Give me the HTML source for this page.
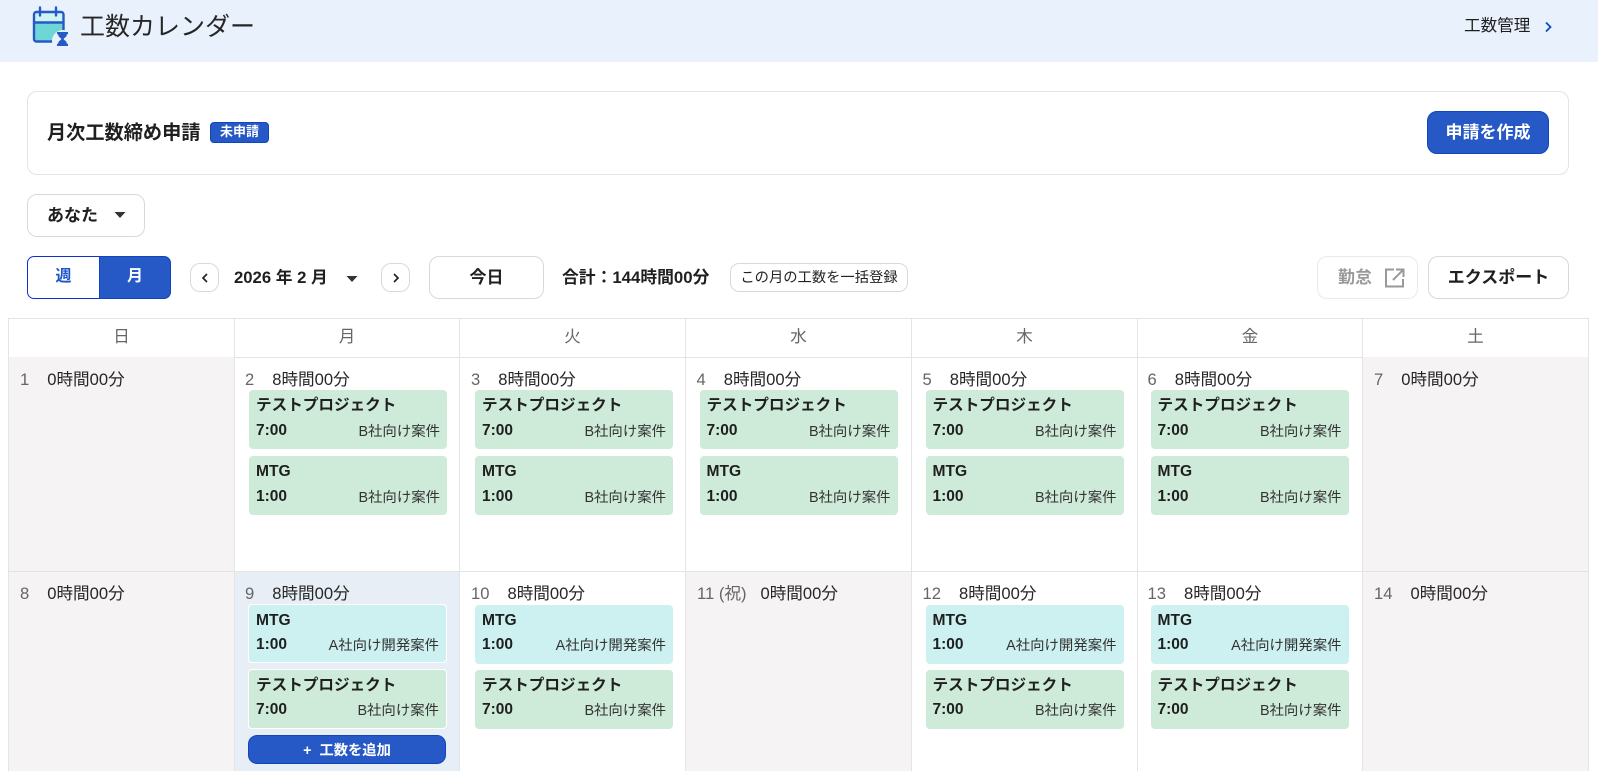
<!DOCTYPE html>
<html lang="ja"><head><meta charset="utf-8"><title>工数カレンダー</title>
<style>
*{box-sizing:border-box}
html,body{margin:0;padding:0;width:1600px;height:771px;overflow:hidden;background:#fff}
#w{position:relative;width:1600px;height:771px;overflow:hidden;background:#fff;color:#1f1f1f;font-family:"Liberation Sans","Noto Sans CJK JP",sans-serif}
.a{position:absolute}
.btn{position:absolute;background:#fff;border:1px solid #d9d9d9;border-radius:10px;display:flex;align-items:center;justify-content:center;font-weight:700;font-size:17px;padding-bottom:5px}
.p{background:#2659c6;border:1px solid #0f46bd;color:#fff}
.th{position:absolute;top:318px;height:40px;border:1px solid #e4e4e4;border-left:0;text-align:center;font-size:16.500px;line-height:37px;color:#666}
.c{position:absolute;border-right:1px solid #e4e4e4;font-size:16.600px}
.g{background:#f5f3f4}
.d{position:absolute;left:11px;top:8px;color:#666;white-space:nowrap}
.d b{font-weight:400;color:#262626;margin-left:18px}
.k{position:absolute;left:14px;width:198px;height:59px;border-radius:4px;background:#ceebd9}
.k.t{background:#ccf1f0}
.k.w{border:1px solid #fff;left:13px;width:199px}
.sh .k{left:13.500px}
.sh .d{left:10.500px}
.s3 .k{left:15px}
.s2 .d{left:10px}
.s6 .k{left:12.500px}
.s6 .d{left:9.500px}
.k i{position:absolute;left:7px;top:5px;font-style:normal;font-weight:700;font-size:15.600px;line-height:22px;white-space:nowrap}
.k u{position:absolute;left:7px;top:29px;text-decoration:none;font-weight:700;font-size:15.500px;line-height:22px}
.k s{position:absolute;right:7px;top:30px;text-decoration:none;font-size:14.400px;line-height:22px;color:#333;white-space:nowrap}
.r1{top:357px;height:215px;border-bottom:1px solid #e4e4e4}.r2{top:572px;height:199px}
.r1 .d{top:9px}
.r1 .k u{top:30px}
.r1 .k s{top:31px}
</style></head><body><div id="w">
<div class="a" style="left:0;top:0;width:1598px;height:62px;background:#e9f1fd"></div>
<svg class="a" style="left:30px;top:5px" width="42" height="42" viewBox="0 0 42 42">
<path d="M4 7h29v11H4z" fill="#cdf3f2"/><path d="M4 18h29v18H4z" fill="#6fd6d6"/>
<rect x="4" y="7" width="29.500" height="29.500" rx="2.500" fill="none" stroke="#2659c6" stroke-width="2.400"/>
<path d="M4 17.500h29" stroke="#2659c6" stroke-width="2.400"/>
<path d="M10 2.500v8M26 2.500v8" stroke="#2659c6" stroke-width="2.400" stroke-linecap="round"/>
<circle cx="33" cy="36" r="11" fill="#e9f1fd"/>
<path d="M27 27h11v2.200h-1.200c0 3.200-2.300 3-3.200 4.800.9 1.800 3.200 1.600 3.200 4.800H38V41H27v-2.200h1.200c0-3.200 2.300-3 3.200-4.800-.9-1.800-3.200-1.600-3.200-4.800H27z" fill="#2659c6"/>
</svg>
<div class="a" style="left:80px;top:9px;font-size:25px;line-height:36px;color:#262626;white-space:nowrap">工数カレンダー</div>
<div class="a" style="left:1464px;top:15px;font-size:16.600px;line-height:22px;white-space:nowrap">工数管理</div>
<svg class="a" style="left:1543px;top:20px" width="12" height="14" viewBox="0 0 12 14"><path d="M3 2.500l4.500 4.500-4.500 4.500" fill="none" stroke="#1248c0" stroke-width="1.800"/></svg>

<div class="a" style="left:27px;top:91px;width:1542px;height:84px;border:1px solid #e4e4e4;border-radius:10px"></div>
<div class="a" style="left:47px;top:121px;font-size:19.200px;line-height:26px;font-weight:700;white-space:nowrap">月次工数締め申請</div>
<div class="a p" style="left:210px;top:122px;width:59px;height:21px;border-radius:4px;font-size:13px;font-weight:700;line-height:17px;text-align:center">未申請</div>
<div class="btn p" style="left:1427px;top:111px;width:122px;height:43px">申請を作成</div>

<div class="btn" style="left:27px;top:194px;width:118px;height:43px;justify-content:flex-start;padding-left:19px">あなた</div>
<svg class="a" style="left:114px;top:212px" width="12" height="7"><path d="M0.500 0h11L6 6z" fill="#333"/></svg>

<div class="a" style="left:27px;top:256px;width:73px;height:43px;border:1px solid #0f2fd0;border-radius:7px 0 0 7px;color:#1d55c8;font-weight:700;font-size:16px;line-height:39px;text-align:center">週</div>
<div class="a p" style="left:99px;top:256px;width:72px;height:43px;border-radius:0 7px 7px 0;font-weight:700;font-size:16px;line-height:39px;text-align:center">月</div>
<div class="btn" style="left:190px;top:263px;width:29px;height:29px;padding:0"><svg width="10" height="12"><path d="M7 2L3 6l4 4" fill="none" stroke="#222" stroke-width="1.700"/></svg></div>
<div class="a" style="left:234px;top:267px;font-size:16.700px;font-weight:700;line-height:22px;white-space:pre">2026 年 2 月</div>
<svg class="a" style="left:346px;top:276px" width="12" height="7"><path d="M0.500 0h11L6 6z" fill="#333"/></svg>
<div class="btn" style="left:381px;top:263px;width:29px;height:29px;padding:0"><svg width="10" height="12"><path d="M3 2l4 4-4 4" fill="none" stroke="#222" stroke-width="1.700"/></svg></div>
<div class="btn" style="left:429px;top:256px;width:115px;height:43px">今日</div>
<div class="a" style="left:562px;top:267px;font-size:16.800px;font-weight:700;line-height:22px;white-space:nowrap">合計：144時間00分</div>
<div class="btn" style="left:730px;top:263px;width:178px;height:29px;font-size:14.300px;font-weight:400;border-radius:9px;color:#222;padding-bottom:3px">この月の工数を一括登録</div>
<div class="btn" style="left:1317px;top:256px;width:101px;height:43px;border-color:#eaeaea;color:#999;justify-content:flex-start;padding-left:20px">勤怠</div>
<svg class="a" style="left:1384px;top:267px" width="22" height="22" viewBox="0 0 22 22"><path d="M10 2.500H2v17h17V12M9 13L19 3M12 2.500h7.500V10" fill="none" stroke="#999" stroke-width="2"/></svg>
<div class="btn" style="left:1428px;top:256px;width:141px;height:43px">エクスポート</div>

<div class="a" style="left:8px;top:318px;width:1px;height:453px;background:#e4e4e4"></div>
<div class="th" style="left:8px;width:227px;border-left:1px solid #e4e4e4">日</div>
<div class="th" style="left:235px;width:225px">月</div>
<div class="th" style="left:460px;width:226px">火</div>
<div class="th" style="left:686px;width:226px">水</div>
<div class="th" style="left:912px;width:226px">木</div>
<div class="th" style="left:1138px;width:225px">金</div>
<div class="th" style="left:1363px;width:226px">土</div>

<div class="c g r1" style="left:9px;width:226px"><div class="d">1<b>0時間00分</b></div></div>
<div class="c r1 s2" style="left:235px;width:225px"><div class="d">2<b>8時間00分</b></div>
<div class="k" style="top:33px"><i>テストプロジェクト</i><u>7:00</u><s>B社向け案件</s></div>
<div class="k" style="top:99px"><i>MTG</i><u>1:00</u><s>B社向け案件</s></div></div>
<div class="c r1 s3" style="left:460px;width:226px"><div class="d">3<b>8時間00分</b></div>
<div class="k" style="top:33px"><i>テストプロジェクト</i><u>7:00</u><s>B社向け案件</s></div>
<div class="k" style="top:99px"><i>MTG</i><u>1:00</u><s>B社向け案件</s></div></div>
<div class="c r1 sh" style="left:686px;width:226px"><div class="d">4<b>8時間00分</b></div>
<div class="k" style="top:33px"><i>テストプロジェクト</i><u>7:00</u><s>B社向け案件</s></div>
<div class="k" style="top:99px"><i>MTG</i><u>1:00</u><s>B社向け案件</s></div></div>
<div class="c r1 sh" style="left:912px;width:226px"><div class="d">5<b>8時間00分</b></div>
<div class="k" style="top:33px"><i>テストプロジェクト</i><u>7:00</u><s>B社向け案件</s></div>
<div class="k" style="top:99px"><i>MTG</i><u>1:00</u><s>B社向け案件</s></div></div>
<div class="c r1 s6" style="left:1138px;width:225px"><div class="d">6<b>8時間00分</b></div>
<div class="k" style="top:33px"><i>テストプロジェクト</i><u>7:00</u><s>B社向け案件</s></div>
<div class="k" style="top:99px"><i>MTG</i><u>1:00</u><s>B社向け案件</s></div></div>
<div class="c g r1" style="left:1363px;width:226px"><div class="d">7<b>0時間00分</b></div></div>

<div class="c g r2" style="left:9px;width:226px"><div class="d">8<b>0時間00分</b></div></div>
<div class="c r2 s2" style="left:235px;width:225px;background:#e7eef6"><div class="d">9<b>8時間00分</b></div>
<div class="k t w" style="top:32px"><i>MTG</i><u>1:00</u><s>A社向け開発案件</s></div>
<div class="k w" style="top:97px;height:60px"><i>テストプロジェクト</i><u>7:00</u><s>B社向け案件</s></div>
<div class="a p" style="left:13px;top:163px;width:198px;height:29px;border-radius:9px;font-size:14.300px;font-weight:700;line-height:31px;text-align:center">+&nbsp; 工数を追加</div></div>
<div class="c r2 s3" style="left:460px;width:226px"><div class="d">10<b>8時間00分</b></div>
<div class="k t" style="top:33px"><i>MTG</i><u>1:00</u><s>A社向け開発案件</s></div>
<div class="k" style="top:98px"><i>テストプロジェクト</i><u>7:00</u><s>B社向け案件</s></div></div>
<div class="c g r2" style="left:686px;width:226px"><div class="d">11 (祝)<b style="margin-left:14px">0時間00分</b></div></div>
<div class="c r2 sh" style="left:912px;width:226px"><div class="d">12<b>8時間00分</b></div>
<div class="k t" style="top:33px"><i>MTG</i><u>1:00</u><s>A社向け開発案件</s></div>
<div class="k" style="top:98px"><i>テストプロジェクト</i><u>7:00</u><s>B社向け案件</s></div></div>
<div class="c r2 s6" style="left:1138px;width:225px"><div class="d">13<b>8時間00分</b></div>
<div class="k t" style="top:33px"><i>MTG</i><u>1:00</u><s>A社向け開発案件</s></div>
<div class="k" style="top:98px"><i>テストプロジェクト</i><u>7:00</u><s>B社向け案件</s></div></div>
<div class="c g r2" style="left:1363px;width:226px"><div class="d">14<b>0時間00分</b></div></div>
</div></body></html>
